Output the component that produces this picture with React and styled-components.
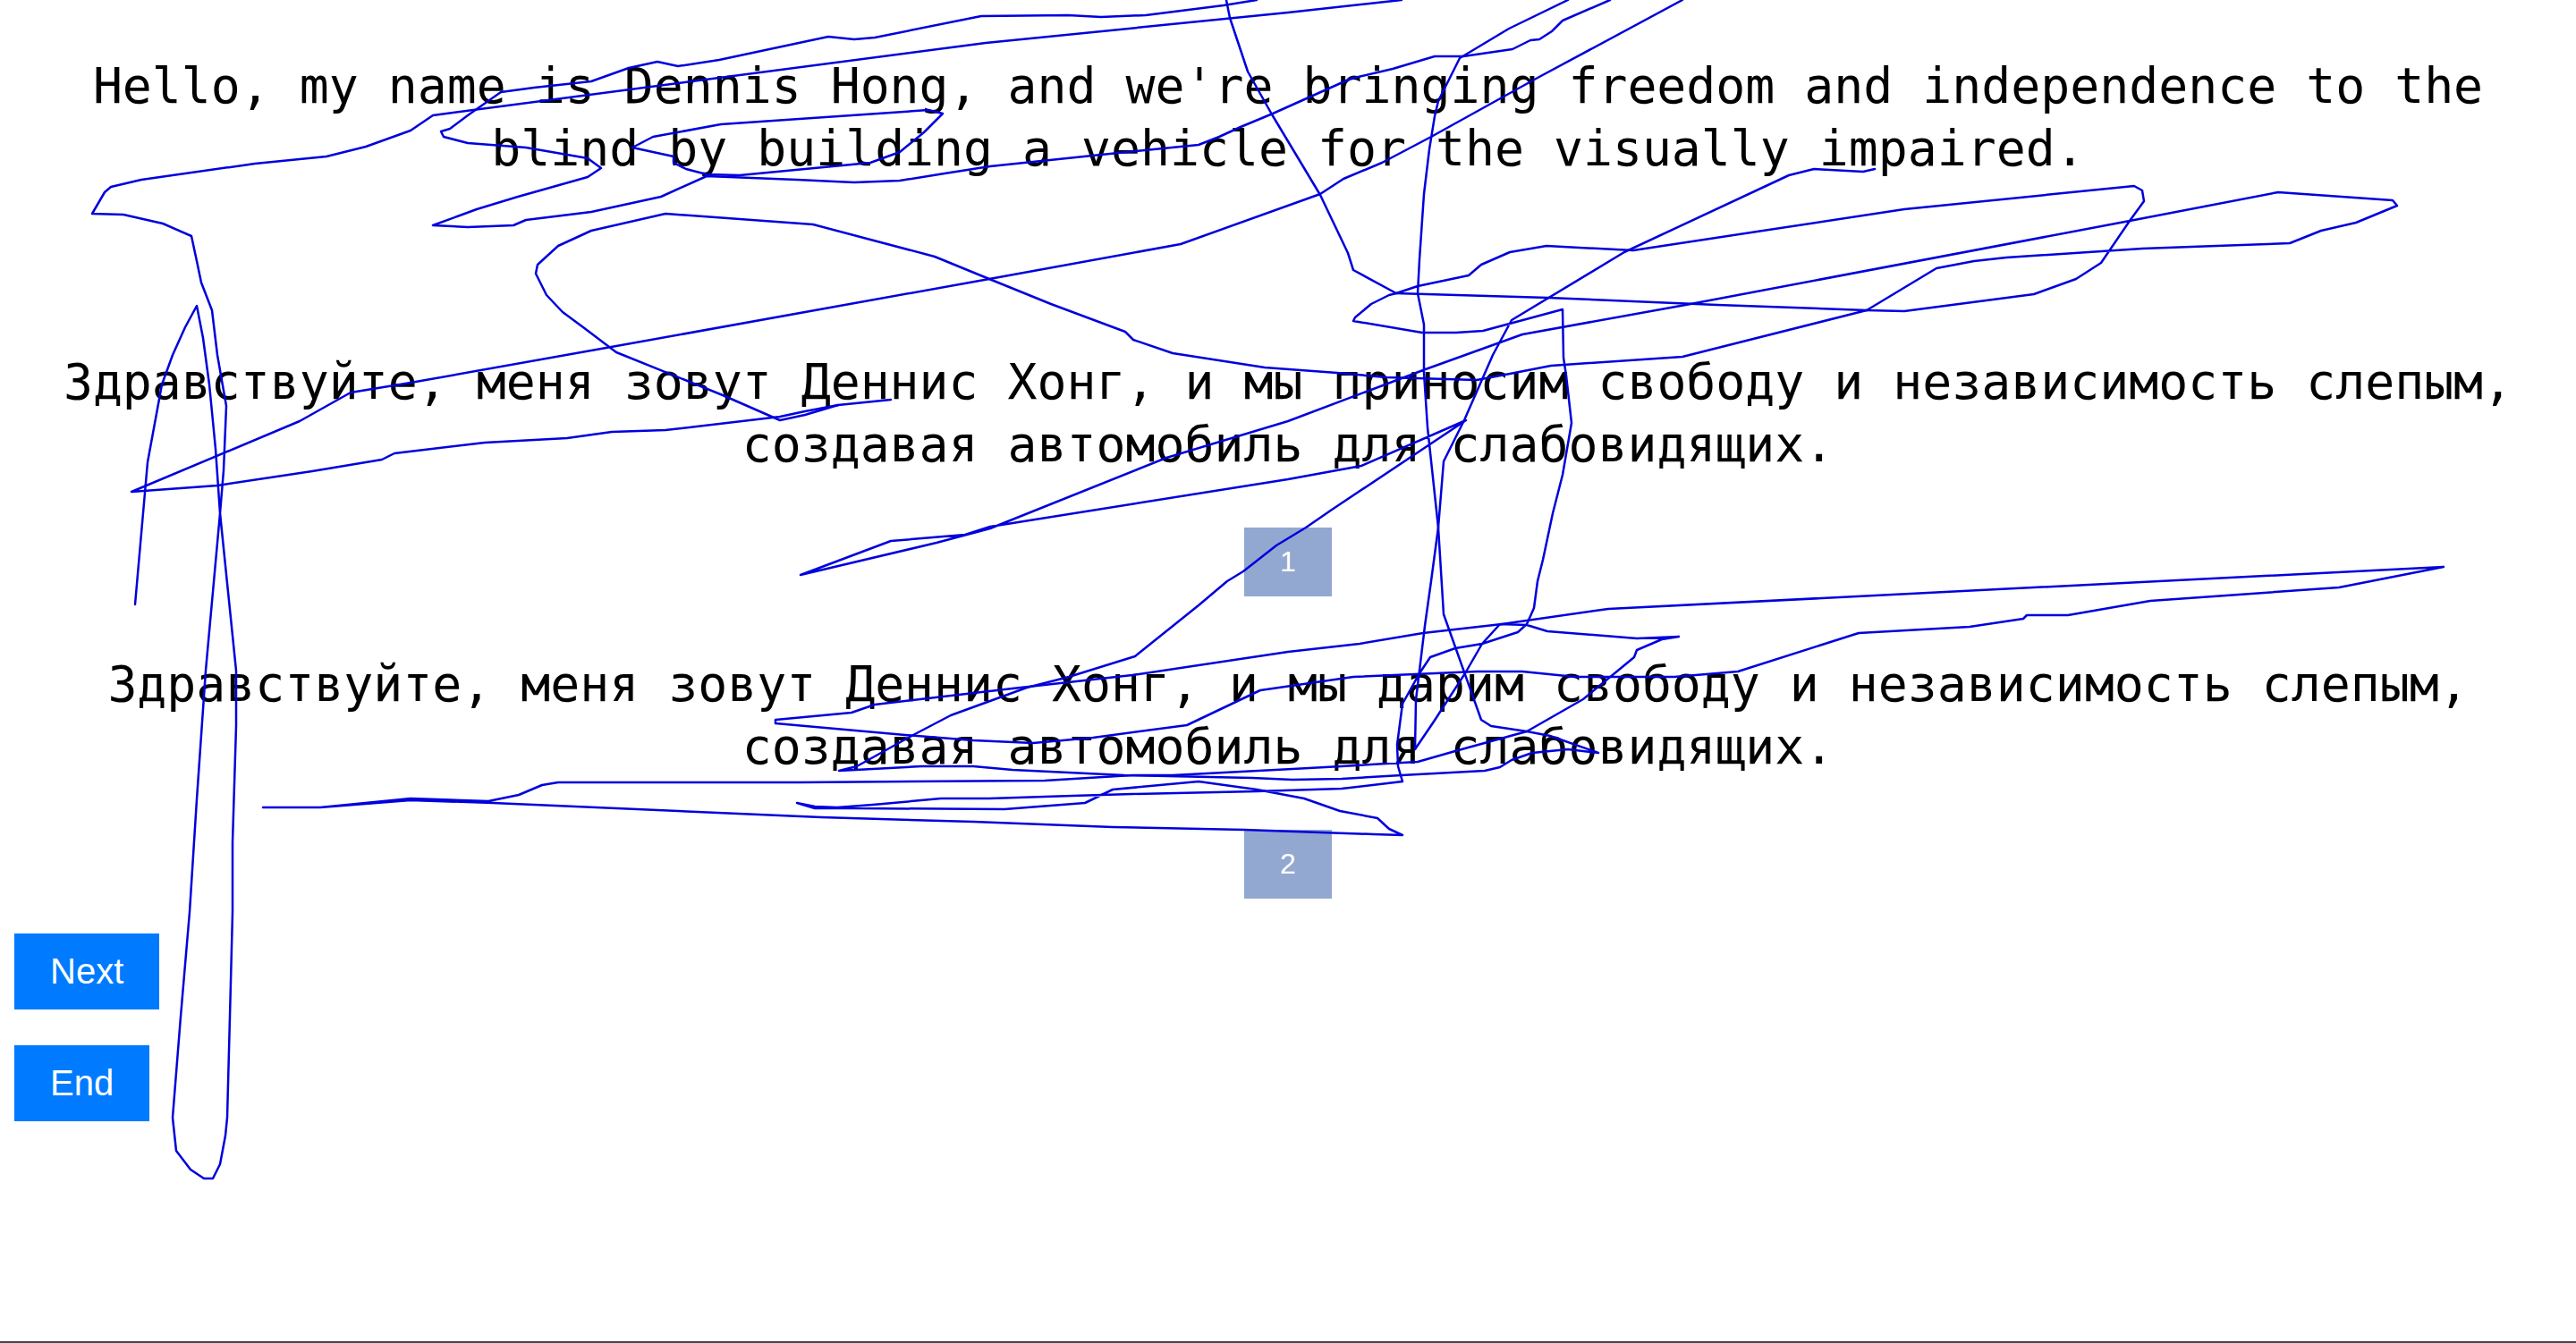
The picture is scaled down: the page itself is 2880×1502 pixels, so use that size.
import React from "react";
import styled, { createGlobalStyle } from "styled-components";

const GlobalStyle = createGlobalStyle`
  html, body {
    margin: 0;
    padding: 0;
    background: #fff;
  }
`;

const Page = styled.div`
  position: relative;
  box-sizing: border-box;
  height: 100vh;
  padding: 61px 8px 0;
  border-bottom: 2px solid #444;
  overflow: hidden;
`;

const Sentence = styled.p`
  margin: ${(p) => p.$top}px 0 0;
  font-family: "DejaVu Sans Mono", monospace;
  font-size: 54.8px;
  line-height: 70px;
  text-align: center;
  color: #000;
`;

const SlideNumber = styled.div`
  width: 98px;
  height: 77px;
  margin: ${(p) => p.$top}px auto 0;
  display: flex;
  align-items: center;
  justify-content: center;
  background: #92a8d1;
  color: #fff;
  font-family: "Liberation Sans", Arial, sans-serif;
  font-size: 32px;
`;

const Actions = styled.div`
  display: flex;
  flex-direction: column;
  align-items: flex-start;
  gap: 40px;
  margin-top: 39px;
  padding-left: 8px;
`;

const ActionButton = styled.button`
  height: 85px;
  padding: 0 40px;
  border: none;
  background: #007bff;
  color: #fff;
  font-family: "Liberation Sans", Arial, sans-serif;
  font-size: 40px;
`;

const Sketch = styled.svg`
  position: absolute;
  top: 0;
  left: 0;
  pointer-events: none;
  fill: none;
  stroke: #0000dd;
  stroke-width: 2.5;
  stroke-linejoin: round;
  stroke-linecap: round;
`;

// the pen strokes drawn over the page
const strokes = [
  "151,676 165,517 181,430 193,397 207,366 220,342 227,378 234,430 241,502 246,574 264,750 264,812 260,942 260,1020 257,1137 254,1250 252,1270 246,1302 238,1318 228,1318 213,1308 197,1287 193,1250 202,1137 212,1020 220,894 230,750 246,574 250,526 253,454 243,397 237,347 225,316 220,292 214,264 182,250 138,240 103,239 117,215 124,209 158,201 285,183 365,175 409,164 459,146 484,129 1102,48 1440,14 1567,0",
  "1405,0 1368,6 1281,17 1231,19 1194,17 1097,18 978,42 955,44 926,41 804,67 758,74 735,69 703,76 661,91 597,98 560,103 523,129 503,144 493,147 496,153 523,160 588,165 657,177 672,188 657,198 579,220 533,234 514,241 484,252 523,254 574,252 588,246 661,237 739,220 790,197 891,201 955,204 1006,202 1056,194 1107,186 1212,175 1300,166 1340,162 1363,153 1387,142 1423,127 1510,88 1557,77 1604,63 1636,63 1691,55 1711,45 1721,44 1735,35 1747,23 1800,0",
  "707,165 730,153 806,139 1038,123 1054,127 1033,148 1006,170 973,182 827,196 790,195 767,189 753,182 753,175 707,165",
  "1753,0 1687,32 1632,65 1608,113 1604,130 1598,167 1592,217 1587,290 1585,328 1592,363 1592,417 1596,478 1608,590 1614,687 1656,805 1667,812 1707,818 1733,823 1787,842 1753,838 1713,842 1690,850 1677,858 1660,862 1567,867 1500,871 1445,872 1400,870 1257,867 1132,861 1088,857 1030,857 938,862 958,857 1021,822 1063,800 1148,769 1195,757 1269,734 1340,677 1372,650 1390,639 1427,610 1460,590 1489,570 1639,470 1522,521 1440,536 1107,589 1079,598 996,605 895,643 1047,607 1107,591 1304,512 1440,471 1591,414 1702,374 1890,340 2381,247 2547,215 2675,224 2680,230 2634,249 2595,258 2560,272 2450,276 2395,278 2243,288 2207,292 2165,300 2087,347 2129,348 2274,329 2321,312 2349,294 2381,247 2397,225 2395,213 2386,208 2129,234 1826,280 1729,275 1688,282 1656,296 1642,308 1585,320 1561,328 1513,302 1507,283 1476,218 1422,128 1395,80 1375,20 1371,0",
  "1561,328 1553,330 1533,340 1515,355 1513,359 1590,372 1628,372 1658,370 1747,346 1748,400 1751,420 1757,473 1747,531 1736,574 1725,626 1719,650 1715,680 1707,698 1697,707 1657,720 1627,725 1599,735 1587,753 1572,780 1568,787 1562,833 1563,857 1568,874 1500,882 1405,885 1266,888 1199,890 1106,893 1052,893 976,900 936,903 911,902 891,898 911,904 954,904 1123,905 1213,898 1244,883 1340,874 1405,883 1458,893 1498,907 1540,915 1553,927 1568,934 1535,933 1391,928 1244,925 1088,919 918,914 551,898 459,895 358,903 294,903 358,903 459,893 546,896 580,889 606,878 624,875 895,875 1168,873 1266,867 1311,867 1445,860 1500,857 1585,852 1627,840 1707,818 1770,782 1827,735 1830,727 1858,715 1877,712 1830,714 1730,706 1707,699 1677,698 1657,720 1638,753 1603,807 1582,838 1583,783 1593,700 1600,650 1608,590 1614,516 1637,470 1669,397 1690,358 1816,282 2000,196 2028,189 2083,192 2096,189",
  "1561,328 1731,333 1920,341 2087,347",
  "1881,0 1719,87 1600,153 1545,182 1502,200 1476,217 1320,273 1106,312 689,387 459,428 392,439 335,471 147,550 243,543 349,527 427,514 441,507 542,495 634,490 684,483 744,481 872,466 900,460 937,453 996,447",
  "937,453 900,464 872,470 808,442 689,394 652,366 629,349 611,330 599,306 601,296 624,275 661,258 744,239 909,251 1045,287 1106,312 1175,340 1258,371 1267,380 1311,395 1414,411 1495,417 1550,422 1651,425 1688,418 1734,409 1881,399 2087,347",
  "867,805 952,797 978,788 1132,770 1266,755 1440,729 1520,720 1591,708 1679,698 1798,681 2732,634 2615,657 2404,672 2312,688 2266,688 2262,692 2202,701 2078,708 1943,751 1872,757 1761,757 1702,751 1651,751 1513,757 1409,772 1327,811 1222,825 1155,831 1088,828 1012,822 867,809 867,805",
];

const App = () => {
  return (
    <Page>
      <GlobalStyle />
      <Sentence $top={0}>
        Hello, my name is Dennis Hong, and we're bringing freedom and
        independence to the blind by building a vehicle for the visually
        impaired.
      </Sentence>
      <Sentence $top={191}>
        Здравствуйте, меня зовут Деннис Хонг, и мы приносим свободу и
        независимость слепым, создавая автомобиль для слабовидящих.
      </Sentence>
      <SlideNumber $top={58}>1</SlideNumber>
      <Sentence $top={63}>
        Здравствуйте, меня зовут Деннис Хонг, и мы дарим свободу и
        независимость слепым, создавая автомобиль для слабовидящих.
      </Sentence>
      <SlideNumber $top={58}>2</SlideNumber>
      <Actions>
        <ActionButton>Next</ActionButton>
        <ActionButton>End</ActionButton>
      </Actions>
      <Sketch width="2880" height="1502" viewBox="0 0 2880 1502">
        {strokes.map((points, i) => (
          <polyline key={i} points={points} />
        ))}
      </Sketch>
    </Page>
  );
};

export default App;
